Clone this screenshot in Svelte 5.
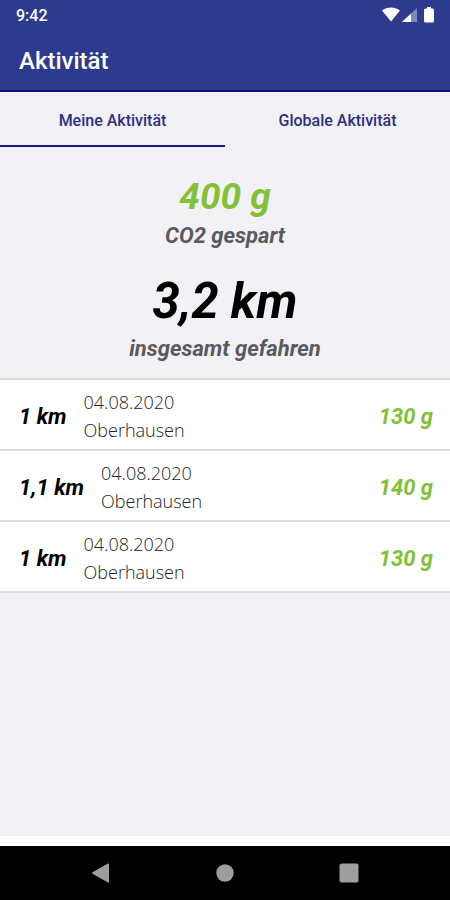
<script lang="ts">
	type Tab = 'own' | 'global';

	interface Trip {
		distance: string;
		date: string;
		place: string;
		saved: string;
	}

	const tabs: { id: Tab; label: string }[] = [
		{ id: 'own', label: 'Meine Aktivität' },
		{ id: 'global', label: 'Globale Aktivität' }
	];

	const trips: Trip[] = [
		{ distance: '1 km', date: '04.08.2020', place: 'Oberhausen', saved: '130 g' },
		{ distance: '1,1 km', date: '04.08.2020', place: 'Oberhausen', saved: '140 g' },
		{ distance: '1 km', date: '04.08.2020', place: 'Oberhausen', saved: '130 g' }
	];

	let activeTab = $state<Tab>('own');
</script>

<div class="screen">
	<header class="app-header">
		<div class="status-bar">
			<span class="clock">9:42</span>
			<div class="status-icons">
				<svg class="wifi" viewBox="0 0 18 16" aria-hidden="true">
					<path d="M0 3.500C5-0.500 13-0.500 18 3.500L9 14.500Z" fill="#fff" />
				</svg>
				<svg class="signal" viewBox="0 0 15 16" aria-hidden="true">
					<path d="M15 1V15H0Z" fill="#fff" opacity="0.4" />
					<path d="M9 6.600V15H0Z" fill="#fff" />
				</svg>
				<svg class="battery" viewBox="0 0 10 16" aria-hidden="true">
					<path d="M3 0H7V1.500H8.500Q10 1.500 10 3V14Q10 15.500 8.500 15.500H1.500Q0 15.500 0 14V3Q0 1.500 1.500 1.500H3Z" fill="#fff" />
				</svg>
			</div>
		</div>
		<h1 class="title">Aktivität</h1>
	</header>

	<div class="tabs" role="tablist">
		{#each tabs as tab (tab.id)}
			<button
				type="button"
				role="tab"
				class="tab"
				class:active={activeTab === tab.id}
				aria-selected={activeTab === tab.id}
				onclick={() => (activeTab = tab.id)}
			>
				{tab.label}
			</button>
		{/each}
	</div>

	<main class="content">
		<section class="summary">
			<p class="total-saved">400 g</p>
			<p class="caption">CO2 gespart</p>
			<p class="total-distance">3,2 km</p>
			<p class="caption">insgesamt gefahren</p>
		</section>

		<ul class="trips">
			{#each trips as trip}
				<li class="trip">
					<span class="distance">{trip.distance}</span>
					<div class="details">
						<span>{trip.date}</span>
						<span>{trip.place}</span>
					</div>
					<span class="saved">{trip.saved}</span>
				</li>
			{/each}
		</ul>
	</main>

	<!-- Android system navigation -->
	<nav class="system-nav">
		<button type="button" class="nav-button" aria-label="Zurück">
			<svg viewBox="0 0 20 20" aria-hidden="true">
				<path d="M18 1V19Q18 20 17 19.400L1.500 10.700Q0.500 10 1.500 9.300L17 0.600Q18 0 18 1Z" />
			</svg>
		</button>
		<button type="button" class="nav-button" aria-label="Startseite">
			<svg viewBox="0 0 20 20" aria-hidden="true"><circle cx="10" cy="10" r="8.700" /></svg>
		</button>
		<button type="button" class="nav-button" aria-label="Übersicht">
			<svg viewBox="0 0 20 20" aria-hidden="true"><rect x="0.500" y="0.500" width="19" height="19" rx="2" /></svg>
		</button>
	</nav>
</div>

<style>
	:global(body) {
		margin: 0;
	}

	.screen {
		display: flex;
		flex-direction: column;
		min-height: 100vh;
		background: #f2f1f6;
		font-family: Roboto, 'Liberation Sans', sans-serif;
		color: #000;
	}

	/* Header */
	.app-header {
		background: #2e3a8e;
		border-bottom: 2px solid #0b0f78;
		color: #fff;
	}
	.status-bar {
		display: flex;
		align-items: center;
		justify-content: space-between;
		height: 30px;
		padding: 0 16px;
	}
	.clock {
		font-size: 16px;
		font-weight: 500;
	}
	.status-icons {
		display: flex;
		align-items: center;
		height: 16px;
	}
	.status-icons svg {
		height: 16px;
	}
	.wifi {
		width: 18px;
		margin-right: 2px;
	}
	.signal {
		width: 15px;
		margin-right: 7px;
	}
	.battery {
		width: 10px;
	}
	.title {
		margin: 0;
		padding: 2px 19px 0;
		font-size: 24px;
		line-height: 58px;
		font-weight: 500;
	}

	/* Tabs */
	.tabs {
		display: flex;
	}
	.tab {
		flex: 1;
		height: 55px;
		padding: 4px 0 0;
		border: none;
		border-bottom: 2px solid transparent;
		background: none;
		font: 500 16px/20px Roboto, 'Liberation Sans', sans-serif;
		color: #2b2f82;
		cursor: pointer;
	}
	.tab.active {
		border-bottom-color: #141a7c;
	}

	.content {
		flex: 1;
	}

	/* Totals */
	.summary {
		padding: 26px 16px 14px;
		text-align: center;
		font-style: italic;
		font-weight: 700;
	}
	.summary p {
		margin: 0;
	}
	.total-saved {
		font-size: 37px;
		line-height: 48px;
		color: #82c136;
	}
	.total-distance {
		padding-top: 19px;
		font-size: 49px;
		line-height: 64px;
	}
	.caption {
		font-size: 22px;
		line-height: 30px;
		color: #5a5a5e;
	}

	/* Trip list */
	.trips {
		margin: 0;
		padding: 0;
		list-style: none;
		border-top: 2px solid #dddde0;
	}
	.trip {
		display: flex;
		align-items: center;
		padding: 8px 17px 5px 19px;
		border-bottom: 2px solid #dddde0;
		background: #fff;
	}
	.distance,
	.saved {
		font-size: 22px;
		font-style: italic;
		font-weight: 700;
	}
	.saved {
		margin-left: auto;
		color: #82c136;
	}
	.details {
		display: flex;
		flex-direction: column;
		margin-left: 17px;
		font-family: 'Open Sans', 'Noto Sans', sans-serif;
		font-size: 18px;
		font-weight: 300;
		line-height: 28px;
		color: #222;
	}

	/* System navigation */
	.system-nav {
		display: flex;
		justify-content: center;
		height: 54px;
		border-top: 10px solid #fff;
		background: #000;
	}
	.nav-button {
		display: flex;
		align-items: center;
		justify-content: center;
		width: 124px;
		padding: 0;
		border: none;
		background: none;
	}
	.nav-button svg {
		width: 20px;
		height: 20px;
		fill: #9e9e9e;
	}
</style>
